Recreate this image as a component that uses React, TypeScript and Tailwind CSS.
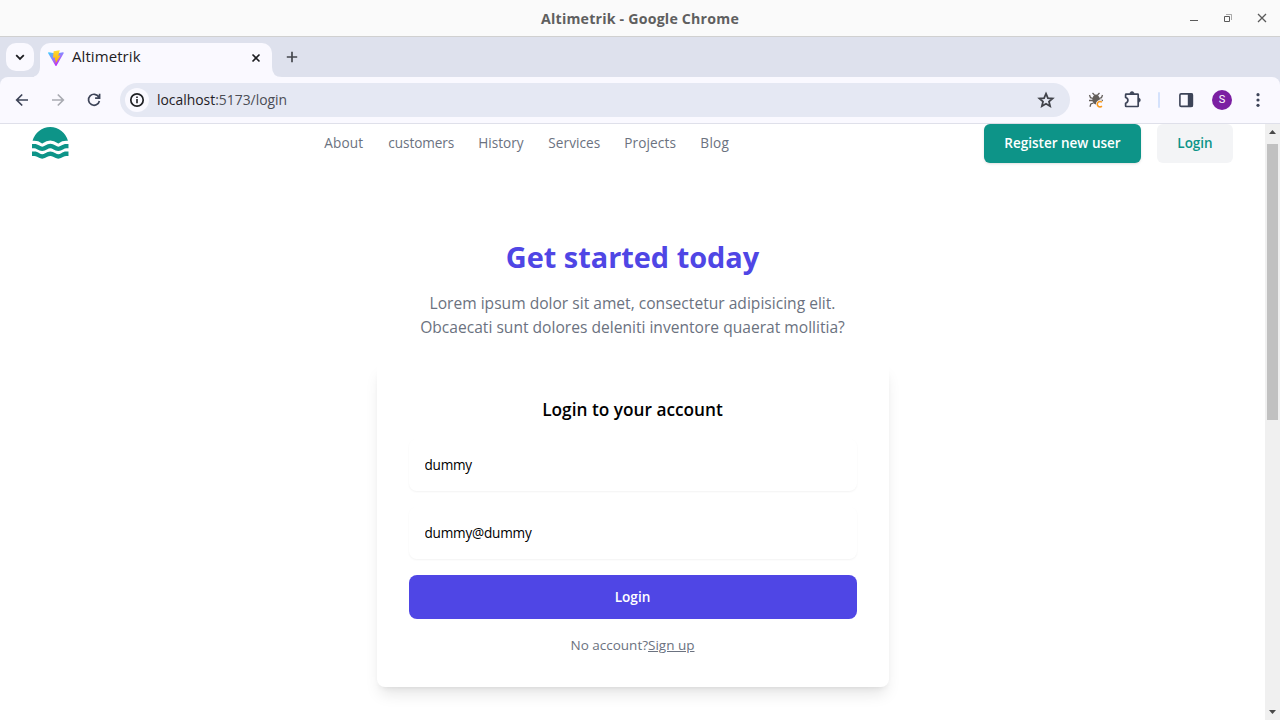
import type { ReactNode } from 'react';

const navLinks = [
  { label: 'About', style: 'w-[40px] tracking-[0.15px]' },
  { label: 'customers', style: 'w-[66px] tracking-[-0.08px]' },
  { label: 'History', style: 'w-[46px]' },
  { label: 'Services', style: 'w-[52px] tracking-[0.07px]' },
  { label: 'Projects', style: 'w-[52px] tracking-[0.12px]' },
  { label: 'Blog', style: 'w-[29px] tracking-[0.3px]' },
];

function TitleBar() {
  return (
    <header className="flex h-[37px] shrink-0 items-center border-b border-[#d0d0d0] bg-[#fafafa]">
      <div className="w-[120px]" />
      <h1 className="flex-1 pt-0.5 text-center text-[14.2px] font-bold tracking-[0.2px] whitespace-nowrap text-[#5f5f5f]">Altimetrik - Google Chrome</h1>
      <div className="flex w-[120px] items-center justify-end gap-[24px] pr-[13px] text-[#5a5a5a]">
        <svg width="10" height="10" viewBox="0 0 10 10" fill="none" stroke="currentColor"><path d="M1 7.5h8" /></svg>
        <svg width="10" height="10" viewBox="0 0 10 10" fill="none" stroke="currentColor"><path d="M1.5 3.5h5v5h-5z" /><path d="M3 1.5h5.5V7" opacity=".5" /></svg>
        <svg width="10" height="10" viewBox="0 0 10 10" fill="none" stroke="currentColor" strokeWidth="1.3"><path d="m1 1 8 8M9 1 1 9" /></svg>
      </div>
    </header>
  );
}

function ViteLogo() {
  return (
    <svg width="16" height="16" viewBox="0 0 32 32">
      <defs>
        <linearGradient id="shield" x1="0" y1="0" x2=".6" y2="1">
          <stop offset="0" stopColor="#41d1ff" />
          <stop offset=".6" stopColor="#a06cff" />
          <stop offset="1" stopColor="#c01ef5" />
        </linearGradient>
        <linearGradient id="bolt" x1="0" y1="0" x2="0" y2="1">
          <stop offset="0" stopColor="#ffdd35" />
          <stop offset="1" stopColor="#ffa800" />
        </linearGradient>
      </defs>
      <path fill="url(#shield)" d="M31.3 6.3 17 31.4a1.2 1.2 0 0 1-2.1 0L.3 6.3a1.2 1.2 0 0 1 1.2-1.7L16 7.1 30.1 4.6a1.2 1.2 0 0 1 1.2 1.7z" />
      <path fill="url(#bolt)" d="M23.5 .4 11.500 2.700a.5.500 0 0 0-.3.400L10 15.500l4.400-.5-1 6 2.300-.6-.6 6.500L25 10.800l-4.500.6 3-11z" />
    </svg>
  );
}

function TabStrip() {
  return (
    <div className="flex h-10 shrink-0 items-end bg-[#dee1ed] pl-1.5">
      <div className="mb-1.5 flex size-7 items-center justify-center rounded-[10px] bg-[#faf9ff]">
        <svg width="10" height="10" viewBox="0 0 10 10" fill="none" stroke="#1c1d21" strokeWidth="1.8"><path d="m1.2 3.2 3.8 3.7 3.8-3.7" /></svg>
      </div>
      <svg width="6" height="10" viewBox="0 0 6 10"><path fill="#faf9ff" d="M6 3.5V10H-4Q6 10 6 0z" /></svg>
      <div className="flex h-[34px] w-[232px] items-center rounded-t-[10px] bg-[#faf9ff] pr-[11px] pb-[5px] pl-2">
        <ViteLogo />
        <span className="ml-2 flex-1 pb-1 text-[15px] leading-5 tracking-[0.08px] text-[#1f2024]">Altimetrik</span>
        <svg width="10" height="10" viewBox="0 0 10 10" fill="none" stroke="#1c1d21" strokeWidth="1.6"><path d="m1.5 1.5 7 7M8.500 1.500 1.500 8.500" /></svg>
      </div>
      <svg width="10" height="10" viewBox="0 0 10 10"><path fill="#faf9ff" d="M0 0v10h10Q0 10 0 0z" /></svg>
      <svg className="mb-[14px] ml-[4px]" width="12" height="12" viewBox="0 0 12 12" fill="none" stroke="#45474d" strokeWidth="1.7"><path d="M6 .8v10.400M.8 6h10.400" /></svg>
    </div>
  );
}

function IconBox({ children, className }: { children: ReactNode; className?: string }) {
  return <div className={`flex size-5 shrink-0 items-center justify-center ${className ?? ''}`}>{children}</div>;
}

function Toolbar() {
  return (
    <div className="shrink-0 bg-[#dee1ed]">
      <div className="flex h-[47px] items-center rounded-t-[8px] border-b border-[#dfe0ea] bg-[#faf9ff] pl-3 text-[#3d4458]">
        <IconBox>
          <svg width="20" height="20" viewBox="0 0 20 20" fill="none" stroke="currentColor" strokeWidth="1.7"><path d="M16 10H5M10.200 4.500 4.700 10l5.500 5.500" /></svg>
        </IconBox>
        <IconBox className="ml-4 text-[#a9abb2]">
          <svg width="20" height="20" viewBox="0 0 20 20" fill="none" stroke="currentColor" strokeWidth="1.7"><path d="M4 10h11M9.800 4.500l5.500 5.500-5.500 5.500" /></svg>
        </IconBox>
        <IconBox className="ml-4">
          <svg width="20" height="20" viewBox="0 0 20 20" fill="none" stroke="currentColor" strokeWidth="1.7"><path d="M14.800 7A5.500 5.500 0 1 0 15.400 11M15.600 3.700v4.500h-4.500" /></svg>
        </IconBox>
        <div className="ml-4 flex h-[34px] w-[950px] items-center rounded-full bg-[#e5e8f3] pr-[15px] pl-[5px]">
          <div className="flex size-6 items-center justify-center rounded-full bg-[#faf9ff]">
            <svg width="16" height="16" viewBox="0 0 16 16" fill="none" stroke="#1f2024"><circle cx="8" cy="8" r="6.2" strokeWidth="1.7" /><path d="M8 7v4.300M8 4.400v1.700" strokeWidth="1.6" /></svg>
          </div>
          <div className="ml-2 flex-1 pt-px text-[13.9px] text-[#4b4d55]"><span className="text-[#1f2024]">localhost</span>:5173/login</div>
          <svg width="18" height="18" viewBox="0 0 18 18" fill="none" stroke="#41434a" strokeWidth="1.8"><path d="m9 2.700 1.900 4.400 4.700.4-3.600 3.100 1.100 4.600L9 12.700l-4.100 2.500L6 10.600 2.400 7.500l4.700-.4z" /></svg>
        </div>
        <svg className="ml-[18px]" width="16" height="18" viewBox="0 0 16 18" fill="none">
          <ellipse cx="8" cy="8.500" rx="3.600" ry="5" fill="#625d59" />
          <path d="M6.500 4 4.500 2M9.500 4l2-2M5 7.500 2.500 6.700 1.500 4M11 7.500l2.500-.8 1-2.700M5 9.500H1M11 9.500h4M5.500 12l-2.700 1-.8 2.700" stroke="#625d59" strokeWidth="1.3" />
          <path d="M13.900 11.300a2.700 2.700 0 1 0 0 3.800" stroke="#faf9ff" strokeWidth="2.8" />
          <path d="M13.900 11.300a2.700 2.700 0 1 0 0 3.800" stroke="#f99a1c" strokeWidth="1.6" />
        </svg>
        <svg className="ml-[18px]" width="20" height="20" viewBox="0 0 20 20" fill="none" stroke="currentColor" strokeWidth="1.7">
          <path d="M4.200 4.100h11.500q.5 0 .5.500v11.300q0 .6-.5.600H4.200q-.6 0-.6-.6v-2.700q2.300-.7 2.300-2.900T3.600 7.500V4.700q0-.6.600-.6z" strokeLinejoin="round" />
          <path d="M7.900 3.700a2.100 2.100 0 0 1 4.200 0zM16.300 8a2.100 2.100 0 0 1 0 4.200z" fill="currentColor" stroke="currentColor" strokeWidth=".6" />
        </svg>
        <div className="ml-[16px] h-4 w-0.5 rounded bg-[#d5e2fc]" />
        <svg className="ml-[18px]" width="16" height="16" viewBox="0 0 16 16"><rect x="1.9" y="1.9" width="12.5" height="12.5" rx="1.2" fill="none" stroke="currentColor" strokeWidth="1.6" /><path fill="currentColor" d="M9.800 1.500H14q1 0 1 1v11.300q0 1-1 1H9.800z" /></svg>
        <div className="ml-[18px] flex size-5 items-center justify-center rounded-full bg-[#7b1fa2] font-['Roboto',sans-serif] text-[11px] text-white">S</div>
        <svg className="ml-[18px]" width="16" height="16" viewBox="0 0 16 16" fill="currentColor"><circle cx="8" cy="2.7" r="1.6" /><circle cx="8" cy="8" r="1.6" /><circle cx="8" cy="13.3" r="1.6" /></svg>
      </div>
    </div>
  );
}

function BrandLogo() {
  return (
    <svg className="mb-0.5 h-8 w-[37.3px] text-[#0d9488]" viewBox="0 0 28 24" fill="currentColor">
      <path d="M.41 10.385A13.700 13.700 0 0 1 26.980 10.385H25.780A9.500 9.500 0 0 0 20.110 12.115Q19.970 12.220 19.810 12.305H19.670Q19.510 12.220 19.370 12.115A10.170 10.170 0 0 0 8.020 12.115Q7.880 12.220 7.720 12.305H7.580Q7.420 12.220 7.280 12.115A9.500 9.500 0 0 0 1.610 10.385Z" />
      <path id="wave" d="M23.620 16.655C24.236 16.175 25 15.924 25.780 15.945H27.390V12.735H25.780C24.405 12.718 23.062 13.146 21.950 13.955A3.640 3.640 0 0 1 17.630 13.955A6.800 6.800 0 0 0 9.860 13.955A3.640 3.640 0 0 1 5.540 13.955C4.414 13.136 3.052 12.707 1.660 12.735H0V15.945H1.610C2.390 15.924 3.154 16.175 3.770 16.655A6.780 6.780 0 0 0 11.530 16.655C12.147 16.177 12.910 15.926 13.690 15.945C14.471 15.922 15.235 16.174 15.850 16.655A6.800 6.800 0 0 0 23.620 16.655Z" />
      <use href="#wave" y="5.740" />
    </svg>
  );
}

function SiteHeader() {
  return (
    <div className="flex h-[39px] shrink-0 items-center pr-8 pl-8">
      <BrandLogo />
      <nav className="ml-[255px] flex gap-6 pb-0.5 text-[13.6px] leading-5 text-[#6b7280]">
        {navLinks.map(({ label, style }) => <a key={label} className={`whitespace-nowrap ${style}`}>{label}</a>)}
      </nav>
      <div className="ml-auto flex gap-4 text-[13.5px] leading-5 font-semibold">
        <button className="h-[39px] w-[157px] rounded-md bg-[#0d9488] pb-0.5 whitespace-nowrap text-white shadow-sm">Register new user</button>
        <button className="h-[39px] w-[76px] rounded-md bg-[#f3f4f6] pb-0.5 text-[#0d9488]">Login</button>
      </div>
    </div>
  );
}

function LoginSection() {
  return (
    <main className="flex flex-col items-center pt-[76px]">
      <h2 className="text-[28.9px] leading-9 font-bold whitespace-nowrap text-[#4f46e5]">Get started today</h2>
      <p className="mt-4 text-center text-[15.6px] leading-6 whitespace-nowrap text-[#6b7280]">
        Lorem ipsum dolor sit amet, consectetur adipisicing elit.<br />Obcaecati sunt dolores deleniti inventore quaerat mollitia?
      </p>
      <form className="mt-6 flex h-[324px] w-[512px] flex-col rounded-lg px-8 pt-8 text-[13.6px] leading-5 shadow-lg">
        <p className="h-7 pt-px text-center text-[17.25px] leading-7 font-semibold text-black">Login to your account</p>
        <input className="mt-4 h-[52px] shrink-0 rounded-lg px-4 pb-0.5 tracking-[-0.25px] text-black shadow-[0_1px_2px_0_rgb(0_0_0/0.05)] outline-none" defaultValue="dummy" />
        <input className="mt-4 h-[52px] shrink-0 rounded-lg px-4 pb-0.5 tracking-[-0.22px] text-black shadow-[0_1px_2px_0_rgb(0_0_0/0.05)] outline-none" defaultValue="dummy@dummy" />
        <button type="button" className="mt-4 h-11 shrink-0 rounded-lg bg-[#4f46e5] font-semibold text-white">Login</button>
        <p className="mt-4 text-center text-[13.5px] text-[#6b7280]">No account?<a className="underline">Sign up</a></p>
      </form>
    </main>
  );
}

function Scrollbar() {
  return (
    <div className="flex w-[15px] shrink-0 flex-col items-center bg-[#f0f0f0]">
      <svg width="15" height="20" viewBox="0 0 15 20" fill="#4a4a4a"><path d="M4 10h7L7.500 6z" /></svg>
      <div className="h-[276px] w-[11px] bg-[#c1c1c1]" />
      <svg className="mt-auto" width="15" height="14" viewBox="0 0 15 14" fill="#4a4a4a"><path d="M4 4h7L7.500 8z" /></svg>
    </div>
  );
}

export default function App() {
  return (
    <div className="flex h-[720px] w-[1280px] flex-col overflow-hidden bg-white font-['Open_Sans',sans-serif]">
      <TitleBar />
      <TabStrip />
      <Toolbar />
      <div className="flex min-h-0 flex-1">
        <div className="min-w-0 flex-1">
          <SiteHeader />
          <LoginSection />
        </div>
        <Scrollbar />
      </div>
    </div>
  );
}
